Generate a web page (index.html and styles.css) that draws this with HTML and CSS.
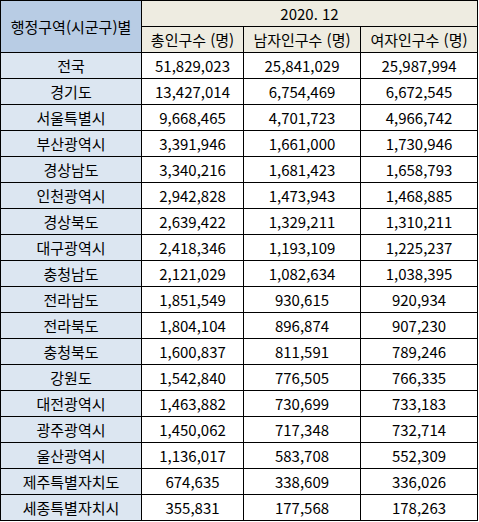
FILE: index.html
```html
<!DOCTYPE html>
<html lang="ko">
<head>
<meta charset="utf-8">
<link rel="stylesheet" href="styles.css">
</head>
<body>
<table class="pop">
<colgroup><col class="c1"><col class="c2"><col class="c3"><col class="c4"></colgroup>
<thead>
<tr><th class="region-h" rowspan="2">행정구역(시군구)별</th><th class="period" colspan="3">2020. 12</th></tr>
<tr><th class="sub">총인구수 (명)</th><th class="sub">남자인구수 (명)</th><th class="sub">여자인구수 (명)</th></tr>
</thead>
<tbody>
<tr><td class="region">전국</td><td>51,829,023</td><td>25,841,029</td><td>25,987,994</td></tr>
<tr><td class="region">경기도</td><td>13,427,014</td><td>6,754,469</td><td>6,672,545</td></tr>
<tr><td class="region">서울특별시</td><td>9,668,465</td><td>4,701,723</td><td>4,966,742</td></tr>
<tr><td class="region">부산광역시</td><td>3,391,946</td><td>1,661,000</td><td>1,730,946</td></tr>
<tr><td class="region">경상남도</td><td>3,340,216</td><td>1,681,423</td><td>1,658,793</td></tr>
<tr><td class="region">인천광역시</td><td>2,942,828</td><td>1,473,943</td><td>1,468,885</td></tr>
<tr><td class="region">경상북도</td><td>2,639,422</td><td>1,329,211</td><td>1,310,211</td></tr>
<tr><td class="region">대구광역시</td><td>2,418,346</td><td>1,193,109</td><td>1,225,237</td></tr>
<tr><td class="region">충청남도</td><td>2,121,029</td><td>1,082,634</td><td>1,038,395</td></tr>
<tr><td class="region">전라남도</td><td>1,851,549</td><td>930,615</td><td>920,934</td></tr>
<tr><td class="region">전라북도</td><td>1,804,104</td><td>896,874</td><td>907,230</td></tr>
<tr><td class="region">충청북도</td><td>1,600,837</td><td>811,591</td><td>789,246</td></tr>
<tr><td class="region">강원도</td><td>1,542,840</td><td>776,505</td><td>766,335</td></tr>
<tr><td class="region">대전광역시</td><td>1,463,882</td><td>730,699</td><td>733,183</td></tr>
<tr><td class="region">광주광역시</td><td>1,450,062</td><td>717,348</td><td>732,714</td></tr>
<tr><td class="region">울산광역시</td><td>1,136,017</td><td>583,708</td><td>552,309</td></tr>
<tr><td class="region">제주특별자치도</td><td>674,635</td><td>338,609</td><td>336,026</td></tr>
<tr><td class="region">세종특별자치시</td><td>355,831</td><td>177,568</td><td>178,263</td></tr>
</tbody>
</table>
</body>
</html>
```
FILE: styles.css
```css
html, body {
  margin: 0;
  padding: 0;
  background: #ffffff;
}
.pop {
  border-collapse: collapse;
  table-layout: fixed;
  width: 477px;
  font-family: "Noto Sans CJK KR", "Noto Sans", sans-serif;
  font-size: 15px;
  color: #000000;
}
.c1 { width: 141px; }
.c2 { width: 102px; }
.c3 { width: 117px; }
.c4 { width: 117px; }
.pop th, .pop td {
  border: 1px solid #000000;
  height: 25px;
  padding: 0;
  text-align: center;
  vertical-align: middle;
  font-weight: normal;
  white-space: nowrap;
  line-height: 20px;
}
.region-h {
  background: #b8cce4;
}
.period, .sub {
  background: #eeece1;
}
.region {
  background: #dce6f1;
}
```
